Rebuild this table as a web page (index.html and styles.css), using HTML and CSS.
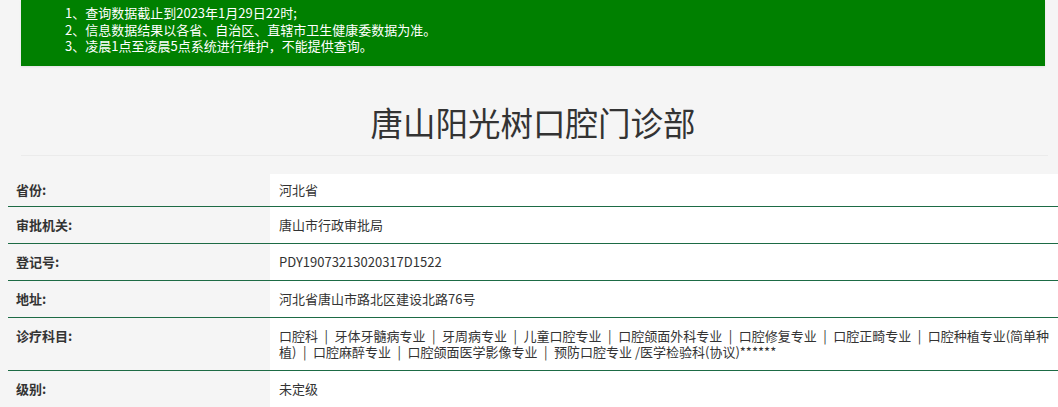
FILE: index.html
```html
<!DOCTYPE html>
<html lang="zh-CN">
<head>
<meta charset="utf-8">
<title>唐山阳光树口腔门诊部</title>
<link rel="stylesheet" href="styles.css">
</head>
<body>
<div class="page">
  <div class="notice">
    <ol class="notice-list">
      <li>1、查询数据截止到2023年1月29日22时;</li>
      <li>2、信息数据结果以各省、自治区、直辖市卫生健康委数据为准。</li>
      <li>3、凌晨1点至凌晨5点系统进行维护，不能提供查询。</li>
    </ol>
  </div>
  <h1 class="title">唐山阳光树口腔门诊部</h1>
  <hr class="divider">
  <table class="info">
    <tr class="first"><th>省份:</th><td>河北省</td></tr>
    <tr><th>审批机关:</th><td>唐山市行政审批局</td></tr>
    <tr><th>登记号:</th><td>PDY19073213020317D1522</td></tr>
    <tr><th>地址:</th><td>河北省唐山市路北区建设北路76号</td></tr>
    <tr><th>诊疗科目:</th><td>口腔科<span class="sep">|</span>牙体牙髓病专业<span class="sep">|</span>牙周病专业<span class="sep">|</span>儿童口腔专业<span class="sep">|</span>口腔颌面外科专业<span class="sep">|</span>口腔修复专业<span class="sep">|</span>口腔正畸专业<span class="sep">|</span>口腔种植专业(简单种植)<span class="sep">|</span>口腔麻醉专业<span class="sep">|</span>口腔颌面医学影像专业<span class="sep">|</span>预防口腔专业 /医学检验科(协议)******</td></tr>
    <tr><th>级别:</th><td>未定级</td></tr>
  </table>
</div>
</body>
</html>
```
FILE: styles.css
```css
html, body {
  margin: 0;
  padding: 0;
  background: #f5f5f5;
}
body {
  font-family: "Noto Sans CJK SC", "Noto Sans", sans-serif;
  color: #333;
  font-size: 13px;
}
.page {
  padding: 0 0 0 8px;
}
.notice {
  margin: 0 13px 0 13px;
  background: #008000;
  color: #fff;
  padding: 5px 0 11px 44px;
  box-shadow: 0 1px 2px rgba(0,0,0,0.08);
}
.notice-list {
  list-style: none;
  margin: 0;
  padding: 0;
  line-height: 16.5px;
  font-size: 13px;
}
.title {
  margin: 0;
  padding: 34px 0 0;
  text-align: center;
  font-size: 32.5px;
  font-weight: normal;
  line-height: 44px;
  color: #333;
}
.divider {
  margin: 11px 10px 0 13px;
  border: 0;
  border-top: 1px solid #ebebeb;
  height: 0;
}
.info {
  margin-top: 18px;
  width: 1050px;
  border-collapse: collapse;
}
.info th, .info td {
  padding: 10px 8px;
  line-height: 16px;
  vertical-align: top;
  text-align: left;
  border-bottom: 1px solid #1d6b45;
}
.info th {
  width: 246px;
  font-weight: bold;
  color: #333;
  background: #f5f5f5;
}
.info td {
  background: #fff;
  padding-left: 9px;
  padding-right: 2px;
  color: #333;
}
.info .first th, .info .first td {
  padding-top: 8px;
  padding-bottom: 8px;
}
.sep {
  margin: 0 6.5px;
}
```
